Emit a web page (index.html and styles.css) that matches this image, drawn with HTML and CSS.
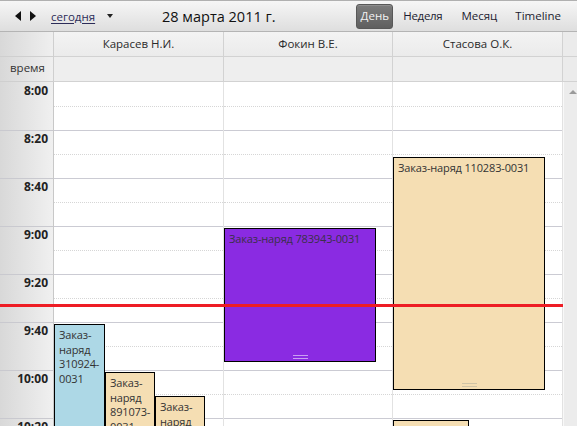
FILE: index.html
```html
<!DOCTYPE html>
<html lang="ru">
<head>
<meta charset="utf-8">
<title>Календарь</title>
<link rel="stylesheet" href="styles.css">
</head>
<body>
<div class="app">
  <div class="toolbar">
    <div class="nav">
      <span class="arrow arrow-left"></span>
      <span class="arrow arrow-right"></span>
      <a class="today" href="#">сегодня</a>
      <span class="drop"></span>
    </div>
    <div class="date">28 марта 2011 г.</div>
    <div class="views">
      <span class="view active">День</span>
      <span class="view v-week">Неделя</span>
      <span class="view v-month">Месяц</span>
      <span class="view v-tl">Timeline</span>
    </div>
  </div>

  <div class="hrow names">
    <div class="tcell"></div>
    <div class="hcell">Карасев Н.И.</div>
    <div class="hcell">Фокин В.Е.</div>
    <div class="hcell">Стасова О.К.</div>
    <div class="filler"></div>
  </div>
  <div class="hrow sub">
    <div class="tcell label">время</div>
    <div class="hcell"></div>
    <div class="hcell"></div>
    <div class="hcell"></div>
    <div class="filler"></div>
  </div>

  <div class="body">
    <div class="times">
      <div class="tslot">8:00</div>
      <div class="tslot">8:20</div>
      <div class="tslot">8:40</div>
      <div class="tslot">9:00</div>
      <div class="tslot">9:20</div>
      <div class="tslot">9:40</div>
      <div class="tslot">10:00</div>
      <div class="tslot">10:20</div>
    </div>

    <div class="col">
      <div class="slot"></div><div class="slot"></div><div class="slot"></div><div class="slot"></div>
      <div class="slot"></div><div class="slot"></div><div class="slot"></div><div class="slot"></div>
      <div class="event blue ev-k1">Заказ-наряд 310924-0031</div>
      <div class="event wheat ev-k2">Заказ-наряд 891073-0031</div>
      <div class="event wheat ev-k3">Заказ-наряд 552870-0031</div>
    </div>

    <div class="col">
      <div class="slot"></div><div class="slot"></div><div class="slot"></div><div class="slot"></div>
      <div class="slot"></div><div class="slot"></div><div class="slot"></div><div class="slot"></div>
      <div class="event purple ev-f1">Заказ-наряд 783943-0031<span class="grip"></span></div>
    </div>

    <div class="col">
      <div class="slot"></div><div class="slot"></div><div class="slot"></div><div class="slot"></div>
      <div class="slot"></div><div class="slot"></div><div class="slot"></div><div class="slot"></div>
      <div class="event wheat ev-s1">Заказ-наряд 110283-0031<span class="grip"></span></div>
      <div class="event wheat ev-s2">Заказ-наряд 640118-0031</div>
    </div>

    <div class="scroll"><span class="up"></span></div>
    <div class="now"></div>
  </div>
</div>
</body>
</html>
```

FILE: styles.css
```css
* { box-sizing: border-box; }
html, body { margin: 0; padding: 0; }
body {
  font-family: "Open Sans", "Noto Sans", "DejaVu Sans", sans-serif;
  font-size: 12px;
  color: #222;
  background: #fff;
  width: 577px;
  height: 426px;
  overflow: hidden;
}
.app { width: 577px; height: 426px; display: flex; flex-direction: column; }

/* toolbar */
.toolbar {
  height: 32px;
  flex: none;
  display: flex;
  align-items: center;
  border-top: 1px solid #b0b0b0;
  border-bottom: 1px solid #b4b4b4;
  background: linear-gradient(#f6f6f6, #dedede);
}
.nav { display: flex; align-items: center; padding-left: 15px; width: 160px; }
.arrow { width: 0; height: 0; border-top: 5px solid transparent; border-bottom: 5px solid transparent; }
.arrow-left { border-right: 6px solid #111; }
.arrow-right { border-left: 6px solid #111; margin-left: 9px; }
.today {
  margin-left: 15px;
  color: #2c2c58;
  font-size: 11.5px;
  text-decoration: underline;
  text-underline-offset: 2px;
}
.drop {
  margin-left: 12px;
  width: 0; height: 0;
  border-left: 3.5px solid transparent;
  border-right: 3.5px solid transparent;
  border-top: 4px solid #222;
}
.date { font-size: 14.5px; color: #111; margin-left: 2px; }
.views { margin-left: auto; display: flex; align-items: center; padding-right: 16px; }
.view {
  font-size: 11.5px;
  color: #1c1c30;
  line-height: 16px;
}
.v-week { margin-left: 10px; letter-spacing: -0.3px; }
.v-month { margin-left: 19px; }
.v-tl { margin-left: 18px; }
.view.active {
  width: 37px;
  height: 25px;
  text-align: center;
  color: #f2f2f2;
  background: linear-gradient(#7c7c7c, #5f5f5f);
  border: 1px solid #585858;
  border-radius: 3px;
  line-height: 22px;
  box-shadow: inset 0 1px 0 rgba(255,255,255,0.15);
}

/* header rows */
.hrow {
  flex: none;
  display: grid;
  grid-template-columns: 54px 170px 169px 170px 14px;
  height: 25px;
}
.tcell {
  background: linear-gradient(90deg, #d8d8d8, #efefef);
  border-right: 1px solid #cfcfcf;
  border-bottom: 1px solid #cfcfcf;
}
.hcell {
  background: linear-gradient(#f3f3f3, #ebebeb);
  border-right: 1px solid #d2d2d2;
  border-bottom: 1px solid #d2d2d2;
  text-align: center;
  line-height: 23px;
  font-size: 11.5px;
  color: #2a2a2a;
}
.sub .hcell { background: #eeeeee; }
.tcell.label { font-size: 11.5px; color: #333; padding-left: 10px; line-height: 21px; }
.filler { background: #ebebeb; border-bottom: 1px solid #d2d2d2; }

/* body */
.body {
  flex: 1;
  position: relative;
  display: grid;
  grid-template-columns: 54px 170px 169px 170px 14px;
  overflow: hidden;
}
.times {
  background: linear-gradient(90deg, #d8d8d8, #f0f0f0);
  border-right: 1px solid #c8c8c8;
  padding-top: 1px;
}
.tslot {
  height: 48px;
  border-bottom: 1px solid #c9c9cf;
  text-align: right;
  padding-right: 5px;
  font-weight: bold;
  font-size: 12px;
  line-height: 16px;
  color: #222;
}
.col {
  position: relative;
  border-right: 1px solid #e2e2e2;
  padding-top: 1px;
}
.slot {
  position: relative;
  height: 48px;
  border-bottom: 1px solid #cbcbd3;
}
.slot::before {
  content: "";
  position: absolute;
  left: 0; right: 0; top: 23px;
  border-top: 1px dotted #d6d6d6;
}
.scroll {
  background: #ececec;
  border-left: 1px solid #f8f8f8;
  position: relative;
}
.up {
  position: absolute;
  left: 5px; top: 8px;
  width: 0; height: 0;
  border-left: 4px solid transparent;
  border-right: 4px solid transparent;
  border-bottom: 4px solid #9a9a9a;
}

/* events */
.event {
  position: absolute;
  border: 1px solid #000;
  padding: 3px 4px;
  font-size: 11px;
  letter-spacing: -0.15px;
  line-height: 14.5px;
  color: #333;
  overflow: hidden;
}
.blue { background: #add8e6; }
.wheat { background: #f5deb3; }
.purple { background: #8a2be2; color: #3a3048; }
.ev-k1 { left: 0; top: 242px; width: 51px; height: 200px; }
.ev-k2 { left: 51px; top: 290px; width: 50px; height: 200px; }
.ev-k3 { left: 101px; top: 314px; width: 50px; height: 200px; }
.ev-f1 { left: 0; top: 146px; width: 152px; height: 134px; }
.ev-s1 { left: 0; top: 75px; width: 152px; height: 233px; }
.ev-s2 { left: 0; top: 338px; width: 76px; height: 100px; }
.grip {
  position: absolute;
  left: 50%;
  bottom: 2px;
  width: 15px;
  height: 4px;
  margin-left: -7px;
  border-top: 1px solid rgba(255,255,255,0.55);
  border-bottom: 1px solid rgba(255,255,255,0.55);
}
.wheat .grip { border-color: #cfc3a6; }

.now {
  position: absolute;
  left: 0;
  top: 222px;
  width: 563px;
  height: 3px;
  background: #ee1d25;
  z-index: 5;
}
```
